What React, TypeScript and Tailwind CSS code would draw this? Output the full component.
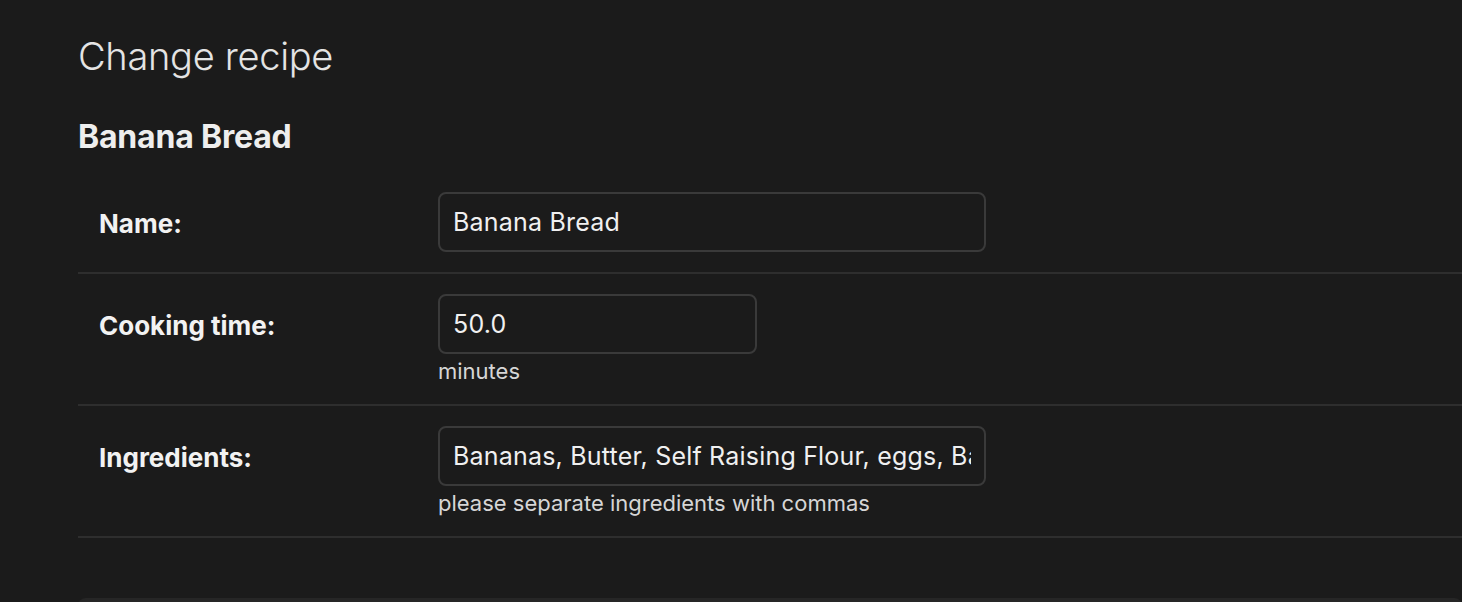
import React from 'react';

type Field = {
    id: string;
    label: string;
    value: string;
    width: string;
    help?: string;
};

const fields: Field[] = [
    { id: 'name', label: 'Name:', value: 'Banana Bread', width: 'w-[548px]' },
    { id: 'cooking_time', label: 'Cooking time:', value: '50.0', width: 'w-[319px]', help: 'minutes' },
    {
        id: 'ingredients',
        label: 'Ingredients:',
        value: 'Bananas, Butter, Self Raising Flour, eggs, Baking Soda',
        width: 'w-[548px]',
        help: 'please separate ingredients with commas',
    },
];

const App: React.FC = () => {
    return (
        <div className="min-h-screen bg-[#1b1b1b] pl-[78px] pt-[30px] text-[#eeeeee] font-['Inter',sans-serif] overflow-hidden">
            <h1 className="text-[38px] leading-[52px] font-light text-[#e4e4e4] tracking-[-0.3px]">Change recipe</h1>
            <h2 className="mt-[35px] text-[32px] leading-[40px] font-bold text-[#eeeeee] tracking-[-0.2px]">Banana Bread</h2>

            <form className="mt-[15px]">
                {fields.map((f) => (
                    <div key={f.id} className="flex border-b-2 border-[#2e2e2e] pt-[20px] pb-[20px]">
                        <label
                            htmlFor={f.id}
                            className="w-[360px] shrink-0 pl-[21px] h-[60px] pt-[2px] flex items-center text-[26px] font-bold text-[#f2f2f2]"
                        >
                            {f.label}
                        </label>
                        <div className="flex flex-col">
                            <input
                                id={f.id}
                                readOnly
                                value={f.value}
                                className={`${f.width} h-[60px] rounded-[8px] border-2 border-[#3a3a3a] bg-[#1b1b1b] px-[13px] text-[25px] text-[#f0f0f0] outline-none font-['Inter',sans-serif] tracking-[0.2px]`}
                            />
                            {f.help && (
                                <p className="mt-[4px] text-[22px] leading-[26px] text-[#d6d6d6]">{f.help}</p>
                            )}
                        </div>
                    </div>
                ))}

                <div className="mt-[60px] h-[80px] rounded-t-[8px] bg-[#262626]" />
            </form>
        </div>
    );
};

export default App;
